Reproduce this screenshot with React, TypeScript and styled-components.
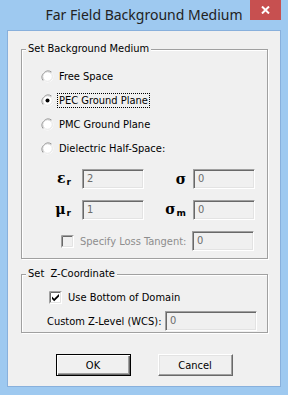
import React from 'react';
import styled, { createGlobalStyle, css } from 'styled-components';

const GlobalStyle = createGlobalStyle`
  html, body {
    margin: 0;
    padding: 0;
  }
  body {
    background: #9ec9f0;
    font-family: "DejaVu Sans Condensed", "DejaVu Sans", sans-serif;
    font-stretch: condensed;
  }
`;

const Window = styled.div`
  width: 288px;
  height: 395px;
  display: flex;
  flex-direction: column;
  background: #9ec9f0;
`;

const TitleBar = styled.div`
  position: relative;
  height: 30px;
  display: flex;
  align-items: center;
  justify-content: center;
`;

const Title = styled.div`
  font-family: "Noto Sans", "Open Sans", sans-serif;
  font-stretch: normal;
  font-size: 14px;
  color: #222;
  margin-top: -2px;
`;

const CloseButton = styled.div`
  position: absolute;
  top: 0;
  right: 7px;
  width: 31px;
  height: 20px;
  background: #c75050;
  display: flex;
  align-items: center;
  justify-content: center;
`;

const Client = styled.div`
  flex: 1;
  margin: 0 7px 8px 7px;
  background: #f0f0f0;
  border: 1px solid #88b0dc;
  display: flex;
  flex-direction: column;
  padding-top: 11px;
`;

const Group = styled.fieldset<{ $gap?: number }>`
  margin: ${(p) => p.$gap ?? 0}px 0 0 13px;
  padding: 0;
  width: 247px;
  box-sizing: border-box;
  min-width: 0;
  border: 1px solid #a0a0a0;
  box-shadow: 1px 1px 0 #fff, inset 1px 1px 0 #fff;
`;

const Legend = styled.legend`
  margin-left: 4px;
  padding: 0 2px;
  font-size: 11px;
  line-height: 14px;
  color: #000;
  background: #f0f0f0;
`;

const GroupBody = styled.div<{ $top: number; $bottom: number }>`
  padding: ${(p) => p.$top}px 0 ${(p) => p.$bottom}px 0;
  display: flex;
  flex-direction: column;
`;

const RadioRow = styled.div`
  height: 24px;
  display: flex;
  align-items: center;
  padding-left: 19px;
  gap: 3px;
`;

const Label = styled.span<{ $focus?: boolean; $disabled?: boolean }>`
  font-size: 11px;
  line-height: 13px;
  padding: 0 1px;
  border: 1px dotted transparent;
  color: ${(p) => (p.$disabled ? '#8d8d8d' : '#000')};
  white-space: nowrap;
  ${(p) =>
    p.$focus &&
    css`
      border-color: #000;
    `}
`;

const PropGrid = styled.div`
  margin-top: 9px;
  display: grid;
  grid-template-columns: 60px 62px 49px 62px;
  grid-auto-rows: 20px;
  row-gap: 11px;
  align-items: center;
`;

const Symbol = styled.div<{ $pad: number }>`
  justify-self: end;
  padding-right: ${(p) => p.$pad}px;
  font-family: "DejaVu Serif", serif;
  font-stretch: normal;
  font-weight: bold;
  font-size: 14px;
  line-height: 20px;
  color: #000;
  display: flex;
  align-items: baseline;
  sub {
    font-family: "DejaVu Sans", sans-serif;
    font-size: 9px;
    font-weight: bold;
    vertical-align: baseline;
    position: relative;
    top: 2px;
    margin-left: 1px;
  }
`;

const Edit = styled.div<{ $w: number }>`
  width: ${(p) => p.$w}px;
  height: 20px;
  box-sizing: border-box;
  background: #f0f0f0;
  border-style: solid;
  border-width: 1px;
  border-color: #a0a0a0 #fff #fff #a0a0a0;
  box-shadow: inset 1px 1px 0 #696969, inset -1px -1px 0 #e3e3e3;
  font-size: 11px;
  line-height: 18px;
  color: #6d6d6d;
  padding-left: 4px;
`;

const CheckRow = styled.div<{ $pad: number; $top: number }>`
  height: 20px;
  margin-top: ${(p) => p.$top}px;
  display: flex;
  align-items: center;
  padding-left: ${(p) => p.$pad}px;
  gap: 4px;
`;

const FieldRow = styled.div<{ $pad: number; $top: number; $right: number }>`
  height: 20px;
  margin-top: ${(p) => p.$top}px;
  display: flex;
  align-items: center;
  padding-left: ${(p) => p.$pad}px;
  padding-right: ${(p) => p.$right}px;
  justify-content: space-between;
`;

const LeftPart = styled.div`
  display: flex;
  align-items: center;
  gap: 4px;
`;

const ButtonBar = styled.div`
  display: flex;
  justify-content: center;
  gap: 27px;
  margin-top: 21px;
`;

const Button = styled.div<{ $default?: boolean }>`
  width: 75px;
  height: 22px;
  box-sizing: border-box;
  background: #f0f0f0;
  display: flex;
  align-items: center;
  justify-content: center;
  font-size: 11px;
  color: #000;
  border: 1px solid;
  border-color: #fff #696969 #696969 #fff;
  box-shadow: inset -1px -1px 0 #a0a0a0, inset 1px 1px 0 #e3e3e3;
  ${(p) =>
    p.$default &&
    css`
      border-color: #000;
      box-shadow: inset 1px 1px 0 #fff, inset -1px -1px 0 #696969, inset -2px -2px 0 #a0a0a0;
    `}
`;

const Radio = ({ checked }: { checked?: boolean }) => (
  <svg width="13" height="13" viewBox="0 0 13 13">
    <circle cx="6.5" cy="6.5" r="6" fill="#fff" />
    <path d="M2.3 10.7 A6 6 0 0 1 10.7 2.3" stroke="#8a8a8a" fill="none" />
    <path d="M10.7 2.3 A6 6 0 0 1 2.3 10.7" stroke="#f4f4f4" fill="none" />
    <path d="M3.1 9.9 A4.8 4.8 0 0 1 9.9 3.1" stroke="#c4c4c4" fill="none" />
    <path d="M9.9 3.1 A4.8 4.8 0 0 1 3.1 9.9" stroke="#e6e6e6" fill="none" />
    {checked && <circle cx="6.5" cy="6.5" r="2" fill="#000" />}
  </svg>
);

const Check = ({ checked, disabled }: { checked?: boolean; disabled?: boolean }) => (
  <svg width="13" height="13" viewBox="0 0 13 13">
    <rect x="0" y="0" width="13" height="13" fill="#fff" />
    <rect x="2" y="2" width="9" height="9" fill={disabled ? '#f0f0f0' : '#fff'} />
    <path d="M0.5 12.5 V0.5 H12.5" stroke="#a0a0a0" fill="none" />
    <path d="M1.5 11.5 V1.5 H11.5" stroke="#696969" fill="none" />
    <path d="M1.5 11.5 H11.5 V1.5" stroke="#e3e3e3" fill="none" />
    {checked && <path d="M3 5.5 L5.2 7.7 L10 3 V5.6 L5.2 10.3 L3 8.1 Z" fill="#000" />}
  </svg>
);

export default function App() {
  return (
    <>
      <GlobalStyle />
      <Window>
        <TitleBar>
          <Title>Far Field Background Medium</Title>
          <CloseButton>
            <svg width="9" height="8" viewBox="0 0 9 8">
              <path d="M1 0.5 L8 7.5 M8 0.5 L1 7.5" stroke="#fff" strokeWidth="2" />
            </svg>
          </CloseButton>
        </TitleBar>
        <Client>
          <Group>
            <Legend>Set Background Medium</Legend>
            <GroupBody $top={8} $bottom={7}>
              <RadioRow>
                <Radio />
                <Label>Free Space</Label>
              </RadioRow>
              <RadioRow>
                <Radio checked />
                <Label $focus>PEC Ground Plane</Label>
              </RadioRow>
              <RadioRow>
                <Radio />
                <Label>PMC Ground Plane</Label>
              </RadioRow>
              <RadioRow>
                <Radio />
                <Label>Dielectric Half-Space:</Label>
              </RadioRow>
              <PropGrid>
                <Symbol $pad={11}>
                  ε<sub>r</sub>
                </Symbol>
                <Edit $w={62}>2</Edit>
                <Symbol $pad={7}>σ</Symbol>
                <Edit $w={62}>0</Edit>
                <Symbol $pad={11}>
                  μ<sub>r</sub>
                </Symbol>
                <Edit $w={62}>1</Edit>
                <Symbol $pad={7}>
                  σ<sub>m</sub>
                </Symbol>
                <Edit $w={62}>0</Edit>
              </PropGrid>
              <FieldRow $pad={39} $top={11} $right={13}>
                <LeftPart>
                  <Check disabled />
                  <Label $disabled>Specify Loss Tangent:</Label>
                </LeftPart>
                <Edit $w={62}>0</Edit>
              </FieldRow>
            </GroupBody>
          </Group>
          <Group $gap={8}>
            <Legend>Set&nbsp; Z-Coordinate</Legend>
            <GroupBody $top={6} $bottom={1}>
              <CheckRow $pad={27} $top={0}>
                <Check checked />
                <Label>Use Bottom of Domain</Label>
              </CheckRow>
              <FieldRow $pad={23} $top={4} $right={10}>
                <Label>Custom Z-Level (WCS):</Label>
                <Edit $w={92}>0</Edit>
              </FieldRow>
            </GroupBody>
          </Group>
          <ButtonBar>
            <Button $default>OK</Button>
            <Button>Cancel</Button>
          </ButtonBar>
        </Client>
      </Window>
    </>
  );
}
